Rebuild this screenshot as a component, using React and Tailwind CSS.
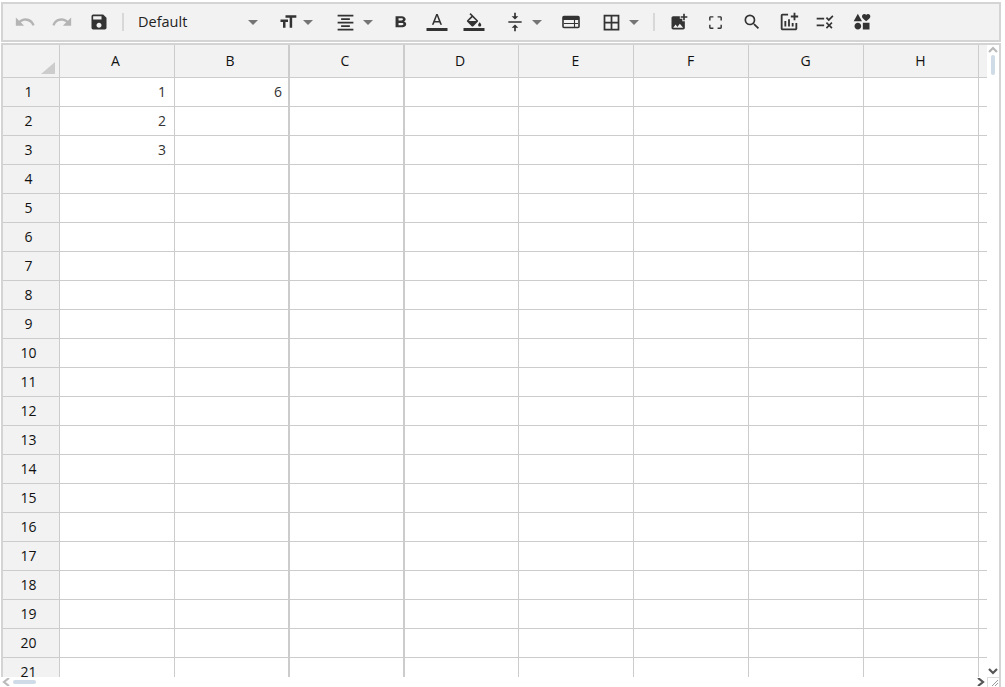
import {
  MdUndo, MdRedo, MdSave, MdFormatSize, MdFormatAlignCenter, MdFormatBold,
  MdVerticalAlignCenter, MdBorderAll, MdAddPhotoAlternate, MdCropFree,
  MdSearch, MdAddchart, MdRule, MdInterests, MdArrowDropDown,
} from 'react-icons/md';

const columns = ['A', 'B', 'C', 'D', 'E', 'F', 'G', 'H'];
const columnClasses = [
  'w-[115px] border-r',
  'w-[115px] border-r-2',
  'w-[115px] border-r-2',
  'w-[114px] border-r',
  'w-[115px] border-r',
  'w-[115px] border-r',
  'w-[115px] border-r',
  'w-[115px] border-r',
];
const headerPadding = ['pr-[3px]', 'pr-[3px]', 'pr-[3px]', 'pr-[3px]', 'pr-[1px]', 'pr-[1px]', 'pr-[1px]', 'pr-[1px]'];
const rows = Array.from({ length: 21 }, (_, i) => i + 1);
const values = { '1-A': '1', '2-A': '2', '3-A': '3', '1-B': '6' };

function Caret() {
  return <MdArrowDropDown className="text-[#757575] shrink-0" size={24} />;
}

function Tool({ icon: Icon, size = 20, color = 'text-[#333]', width = 'w-[37px]', className = '' }) {
  return (
    <div className={`${width} h-full flex items-center justify-center shrink-0`}>
      <Icon size={size} className={`${color} ${className}`} />
    </div>
  );
}

function TextColorIcon() {
  return (
    <svg width="24" height="24" viewBox="0 0 24 24" fill="#333">
      <path transform="translate(2.6 1.6) scale(0.78)" d="M11 3L5.5 17h2.25l1.12-3h6.25l1.12 3h2.25L13 3h-2zm-1.38 9L12 5.67 14.38 12H9.62z" />
      <rect x="1.5" y="18" width="21" height="3" />
    </svg>
  );
}

function FillColorIcon() {
  return (
    <svg width="24" height="24" viewBox="0 0 24 24" fill="#333">
      <path transform="translate(2.5 3) scale(0.8)" d="M16.56 8.94L7.62 0 6.21 1.41l2.38 2.38-5.15 5.15c-.59.59-.59 1.54 0 2.12l5.5 5.5c.29.29.68.44 1.06.44s.77-.15 1.06-.44l5.5-5.5c.59-.58.59-1.53 0-2.12zM5.21 10L10 5.21 14.79 10H5.21zM19 11.5s-2 2.17-2 3.5c0 1.1.9 2 2 2s2-.9 2-2c0-1.33-2-3.5-2-3.5z" />
      <rect x="1.5" y="18" width="21" height="3" />
    </svg>
  );
}

function MergeIcon() {
  return (
    <svg width="20" height="20" viewBox="0 0 20 20">
      <rect x="2" y="4.5" width="16" height="11" rx="1" fill="none" stroke="#333" strokeWidth="1.6" />
      <rect x="2" y="4" width="16" height="4" fill="#333" />
      <path d="M3 11.5h14M13.5 8v7" stroke="#333" strokeWidth="1.1" />
    </svg>
  );
}

function Chevron({ points, color }) {
  return (
    <svg width="10" height="8" viewBox="0 0 10 8" className="shrink-0">
      <polyline points={points} fill="none" stroke={color} strokeWidth="2.2" />
    </svg>
  );
}

function Toolbar() {
  return (
    <div className="h-[40px] w-[1000px] border-2 border-[#d4d4d4] bg-[#f2f2f2] flex items-center pl-[3px] shrink-0">
      <Tool icon={MdUndo} size={22} color="text-[#b4b4b4]" />
      <Tool icon={MdRedo} size={22} color="text-[#b4b4b4]" />
      <Tool icon={MdSave} />
      <div className="w-[2px] h-[18px] bg-[#d8d8d8] ml-[5px] shrink-0" />
      <div className="w-[141px] flex items-center justify-between pl-[14px] text-[14.5px] text-[#222] shrink-0">
        <span>Default</span>
        <Caret />
      </div>
      <div className="flex items-center ml-[13px] w-[42px] shrink-0">
        <MdFormatSize size={20} className="text-[#333] shrink-0" />
        <div className="-ml-[2px]"><Caret /></div>
      </div>
      <div className="flex items-center ml-[15px] w-[45px] shrink-0">
        <MdFormatAlignCenter size={21} className="text-[#333] shrink-0" />
        <Caret />
      </div>
      <div className="ml-[2px] h-full flex">
        <Tool icon={MdFormatBold} size={19} className="scale-x-125" />
      </div>
      <div className="w-[36px] flex items-center justify-center shrink-0"><TextColorIcon /></div>
      <div className="w-[37px] flex items-center justify-center shrink-0"><FillColorIcon /></div>
      <div className="flex items-center ml-[13px] w-[44px] shrink-0">
        <MdVerticalAlignCenter size={20} className="text-[#333] shrink-0" />
        <Caret />
      </div>
      <div className="w-[37px] ml-[3px] flex items-center justify-center shrink-0"><MergeIcon /></div>
      <div className="flex items-center ml-[12px] w-[45px] shrink-0">
        <MdBorderAll size={21} className="text-[#333] shrink-0" />
        <Caret />
      </div>
      <div className="w-[2px] h-[18px] bg-[#d8d8d8] ml-[7px] shrink-0" />
      <Tool icon={MdAddPhotoAlternate} width="w-[47px]" />
      <Tool icon={MdCropFree} size={17} width="w-[27px]" />
      <Tool icon={MdSearch} width="w-[46px]" />
      <Tool icon={MdAddchart} size={22} width="w-[27px]" />
      <Tool icon={MdRule} width="w-[46px]" />
      <Tool icon={MdInterests} width="w-[28px]" />
    </div>
  );
}

function Table() {
  return (
    <div className="flex-1 min-w-0 overflow-hidden text-[14px] text-[#111]">
      <div className="flex h-[33px] bg-[#f2f2f2] border-b border-[#ccc]">
        <div className="w-[57px] shrink-0 border-r border-[#ccc] relative">
          <div className="absolute right-[4px] bottom-[3px] w-0 h-0 border-l-[14px] border-l-transparent border-b-[12px] border-b-[#ccc]" />
        </div>
        {columns.map((c, i) => (
          <div key={c} className={`${columnClasses[i]} ${headerPadding[i]} shrink-0 flex items-center justify-center pb-[1px] border-[#ccc]`}>
            {c}
          </div>
        ))}
      </div>
      {rows.map(r => (
        <div key={r} className="flex h-[29px] border-b border-[#ccc]">
          <div className="w-[57px] shrink-0 bg-[#f2f2f2] border-r border-[#ccc] flex items-center justify-center pr-[5px] pb-[2px]">
            {r}
          </div>
          {columns.map((c, i) => (
            <div key={c} className={`${columnClasses[i]} ${i === 0 ? 'pr-[8px]' : 'pr-[6px]'} shrink-0 flex items-center justify-end pb-[2px] text-[#333] border-[#ccc]`}>
              {values[`${r}-${c}`]}
            </div>
          ))}
        </div>
      ))}
    </div>
  );
}

export default function App() {
  return (
    <div className="w-[1005px] h-[687px] bg-white flex flex-col pt-[2px] pl-[1px] overflow-hidden font-['Open_Sans',sans-serif]">
      <Toolbar />
      <div className="h-[634px] mt-[1px] w-[1000px] border-t-2 border-x-2 border-[#d4d4d4] flex shrink-0">
        <Table />
        {/* vertical scrollbar */}
        <div className="w-[12px] shrink-0 flex flex-col items-center pt-[1px] pb-[2px]">
          <Chevron points="1,6 5,2 9,6" color="#bbb" />
          <div className="w-[4px] h-[20px] mt-[1px] rounded bg-[#cfdbe6]" />
          <div className="flex-1" />
          <Chevron points="1,2 5,6 9,2" color="#555" />
        </div>
      </div>
      {/* horizontal scrollbar */}
      <div className="h-[10px] w-[1000px] flex border-r-2 border-[#d4d4d4] shrink-0">
        <div className="flex-1 flex items-center pl-[1px] pr-[1px]">
          <Chevron points="7,0 2,4 7,8" color="#bbb" />
          <div className="w-[23px] h-[4px] ml-[1px] rounded bg-[#cfdbe6]" />
          <div className="flex-1" />
          <Chevron points="2,0 7,4 2,8" color="#555" />
        </div>
        <div className="w-[12px] shrink-0 border-l border-t border-[#ddd] flex items-end justify-end">
          <svg width="8" height="8" viewBox="0 0 8 8">
            <path d="M1 7l6-6M4 7l3-3" stroke="#999" strokeWidth="1" />
          </svg>
        </div>
      </div>
    </div>
  );
}
